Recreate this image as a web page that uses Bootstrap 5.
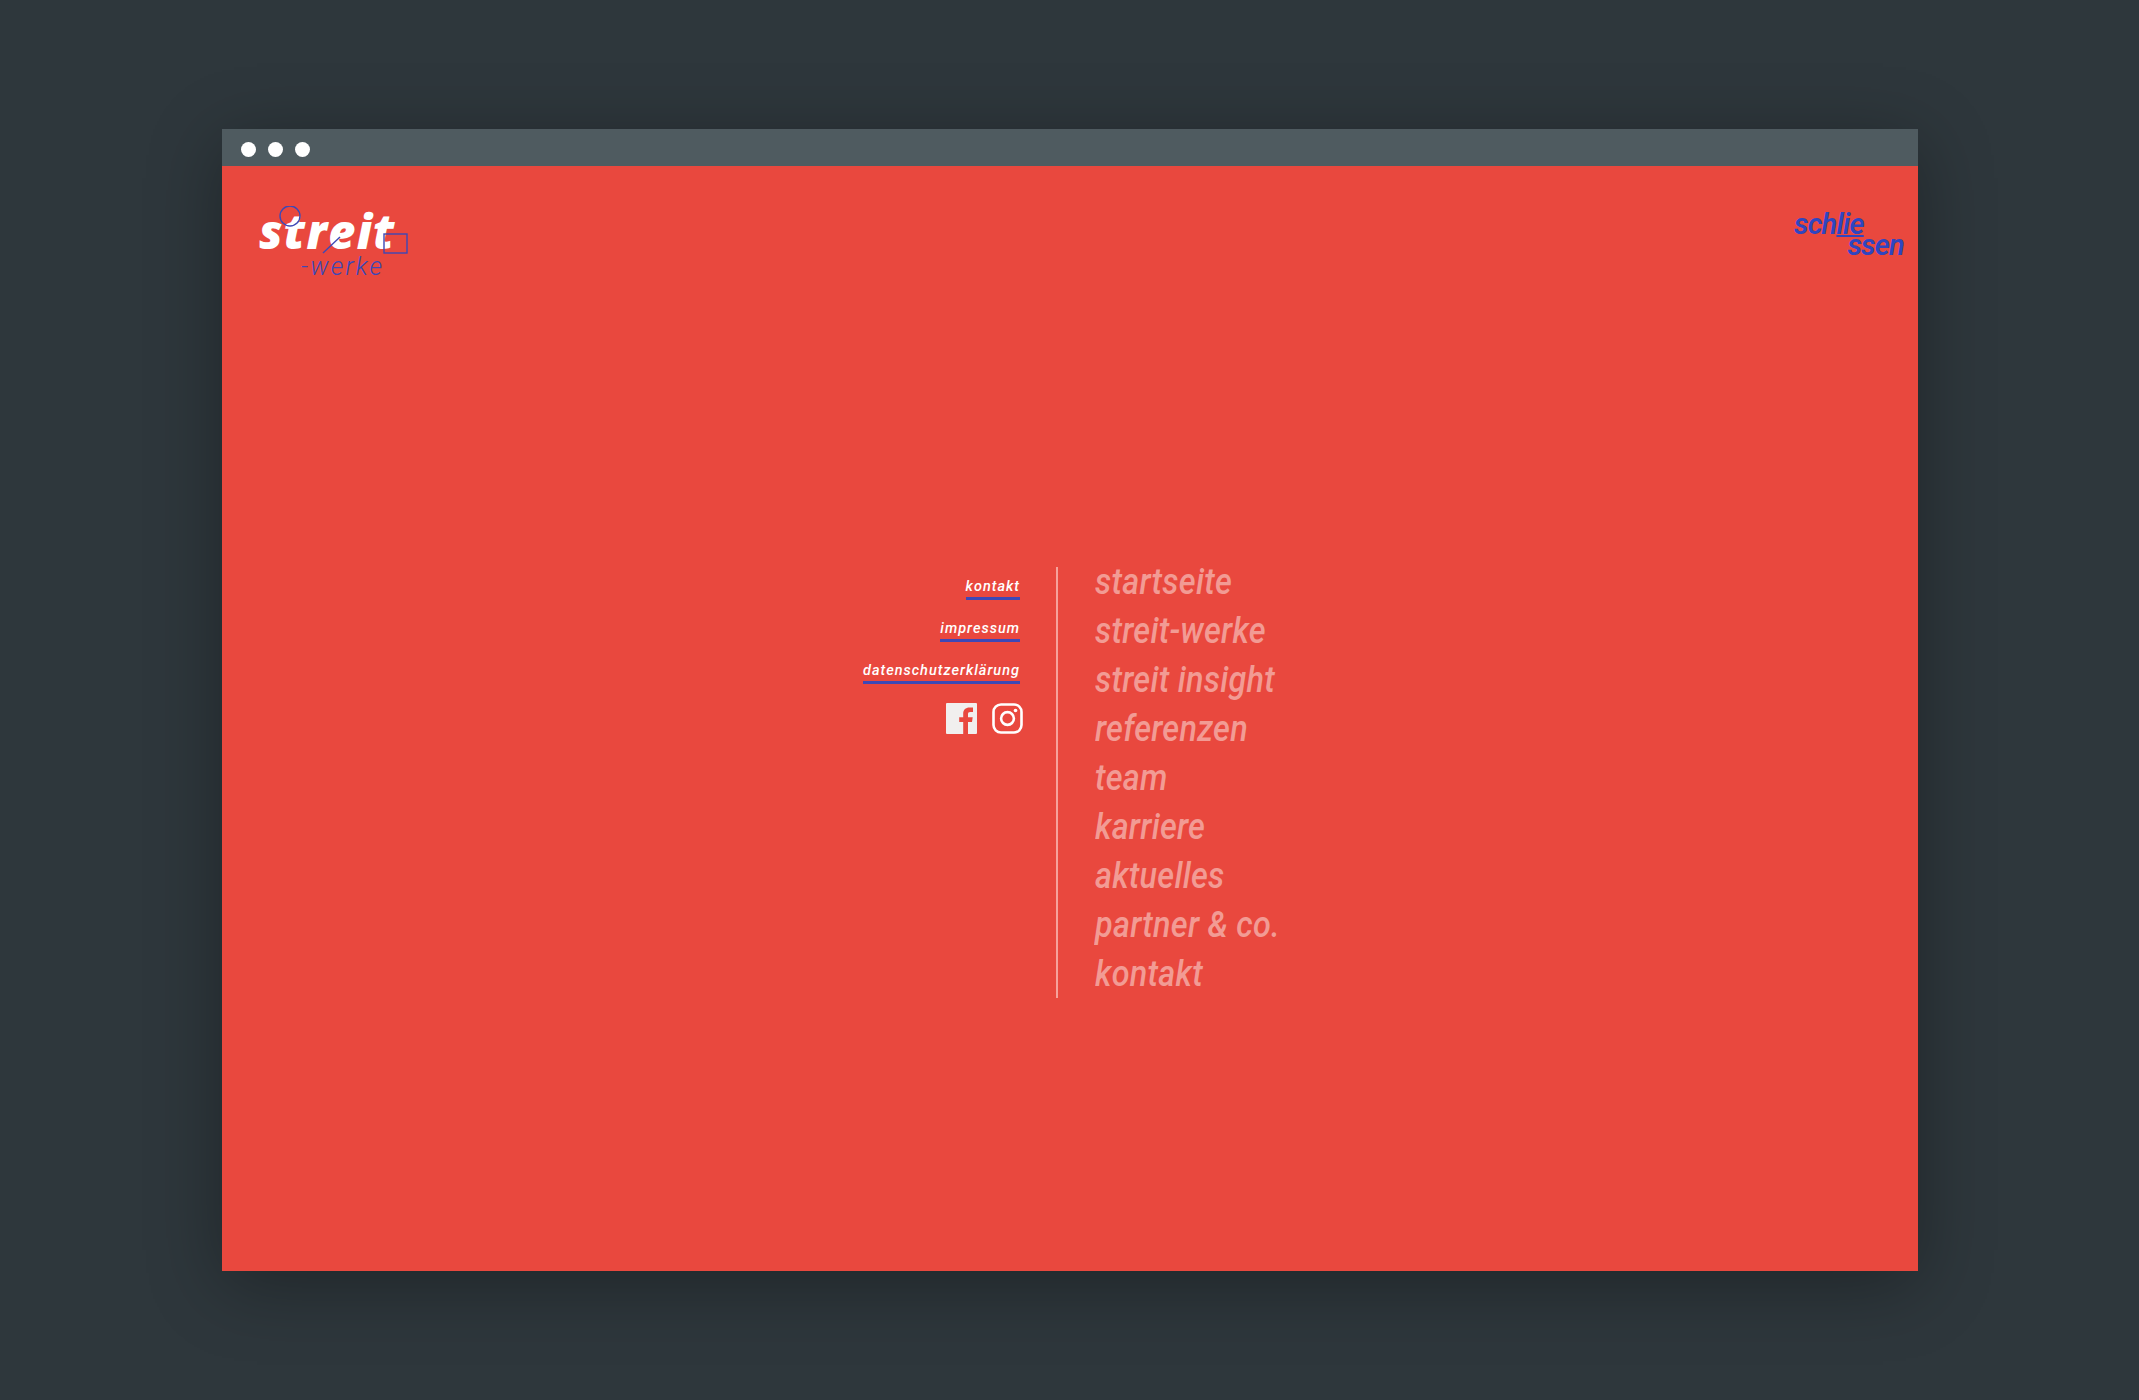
<!DOCTYPE html>
<html lang="de">
<head>
    <meta charset="UTF-8" />
    <meta name="viewport" content="width=device-width, initial-scale=1.0" />
    <title>streit-werke</title>
    <link href="https://cdn.jsdelivr.net/npm/bootstrap@5.3.3/dist/css/bootstrap.min.css" rel="stylesheet" />
    <style>
        body {
            background: #2e373c;
            height: 1400px;
            overflow: hidden;
            font-family: "Roboto", sans-serif;
        }

        .browser-window {
            width: 1696px;
            height: 1142px;
            margin-left: 1px;
            box-shadow: 0 14px 70px rgba(0, 0, 0, 0.32);
        }

        .title-bar {
            height: 37px;
            background: #4f5b60;
            padding: 3px 0 0 19px;
            gap: 12px;
        }

        .title-dot {
            width: 15px;
            height: 15px;
            border-radius: 50%;
            background: #fff;
        }

        .red-pane {
            height: 1105px;
            background: #e9483e;
        }

        .pane-head {
            height: 401px;
            padding: 40px 14px 0 34px;
        }

        /* logo */
        .logo-box {
            width: 160px;
            height: 90px;
        }

        .logo-main {
            position: absolute;
            left: 3px;
            top: 2px;
            font: italic 800 47px/1 "Open Sans", sans-serif;
            color: #fff;
            letter-spacing: 1.2px;
        }

        .logo-sub {
            position: absolute;
            left: 45px;
            top: 48px;
            font: italic 300 25px/1 "Roboto", sans-serif;
            color: #3d48b6;
            letter-spacing: 2.2px;
        }

        .logo-marks {
            position: absolute;
            left: 0;
            top: 0;
        }

        /* schliessen */
        .close-link {
            display: block;
            width: 110px;
            margin-top: 8px;
            font: italic 600 29px/21px "Roboto", sans-serif;
            color: #2f45c0;
            text-decoration: none;
            letter-spacing: -0.8px;
        }

        .close-top {
            display: block;
        }

        .close-top span {
            text-decoration: underline;
            text-decoration-thickness: 2px;
            text-underline-offset: 1px;
        }

        .close-bottom {
            display: block;
            text-align: right;
        }

        /* menu */
        .side-col {
            width: 798px;
            padding-top: 7px;
        }

        .side-link {
            display: inline-block;
            font: italic 500 14.5px/18px "Roboto", sans-serif;
            color: #fff;
            text-decoration: none;
            letter-spacing: 1px;
            border-bottom: 3px solid #3d48b6;
            padding-bottom: 1px;
        }

        .side-item {
            height: 42px;
        }

        .social-row {
            margin-right: -3px;
            margin-top: 3px;
            gap: 15px;
        }

        .main-col {
            margin-left: 36px;
            padding-left: 37px;
            height: 431px;
            border-left: 2px solid #f6a29b;
        }

        .main-link {
            display: block;
            margin-top: -9px;
            margin-bottom: 9px;
            font: italic 500 36px/49px "Roboto", sans-serif;
            color: #f29b94;
            text-decoration: none;
            letter-spacing: 0.3px;
            transform: scaleX(0.9);
            transform-origin: left center;
            white-space: nowrap;
        }
    </style>
</head>
<body class="d-flex align-items-center justify-content-center">

<div class="browser-window">
    <!-- window bar -->
    <div class="title-bar d-flex align-items-center">
        <span class="title-dot"></span>
        <span class="title-dot"></span>
        <span class="title-dot"></span>
    </div>

    <div class="red-pane">
        <div class="pane-head d-flex justify-content-between align-items-start">
            <a class="logo-box position-relative d-block text-decoration-none" href="#">
                <span class="logo-main">streit</span>
                <span class="logo-sub">-werke</span>
                <svg class="logo-marks" width="160" height="90" viewBox="0 0 160 90" fill="none" stroke="#3d48b6" stroke-width="1.4">
                    <circle cx="34" cy="10" r="10" />
                    <rect x="128" y="28" width="23" height="19" />
                    <path d="M67 47 84 31" />
                </svg>
            </a>

            <a class="close-link" href="#">
                <span class="close-top">sch<span>lie</span></span>
                <span class="close-bottom">ssen</span>
            </a>
        </div>

        <div class="d-flex">
            <div class="side-col text-end">
                <div class="side-item"><a class="side-link" href="#">kontakt</a></div>
                <div class="side-item"><a class="side-link" href="#">impressum</a></div>
                <div class="side-item"><a class="side-link" href="#">datenschutzerklärung</a></div>
                <div class="social-row d-flex justify-content-end">
                    <a href="#" aria-label="Facebook">
                        <svg class="d-block" width="31" height="31" viewBox="0 0 31 31">
                            <path fill="#f1efee" d="M1 0h29a1 1 0 0 1 1 1v29a1 1 0 0 1-1 1h-8V19h4l.7-4.800H22v-3c0-1.400.6-2.300 2.300-2.300H27V4.600c-.6-.1-2-.2-3.600-.2-3.600 0-6.200 2.200-6.200 6.200v3.600h-4V19h4v12H1a1 1 0 0 1-1-1V1a1 1 0 0 1 1-1z" />
                        </svg>
                    </a>
                    <a href="#" aria-label="Instagram">
                        <svg class="d-block" width="31" height="31" viewBox="0 0 31 31" fill="none" stroke="#fff">
                            <rect x="1.500" y="1.500" width="28" height="28" rx="7.500" stroke-width="2.600" />
                            <circle cx="15.500" cy="15.500" r="6.400" stroke-width="2.600" />
                            <circle cx="23.500" cy="7.500" r="1.800" fill="#fff" stroke="none" />
                        </svg>
                    </a>
                </div>
            </div>

            <nav class="main-col">
                <a class="main-link" href="#">startseite</a>
                <a class="main-link" href="#">streit-werke</a>
                <a class="main-link" href="#">streit insight</a>
                <a class="main-link" href="#">referenzen</a>
                <a class="main-link" href="#">team</a>
                <a class="main-link" href="#">karriere</a>
                <a class="main-link" href="#">aktuelles</a>
                <a class="main-link" href="#">partner &amp; co.</a>
                <a class="main-link" href="#">kontakt</a>
            </nav>
        </div>
    </div>
</div>

<script src="https://cdn.jsdelivr.net/npm/bootstrap@5.3.3/dist/js/bootstrap.bundle.min.js"></script>
</body>
</html>
